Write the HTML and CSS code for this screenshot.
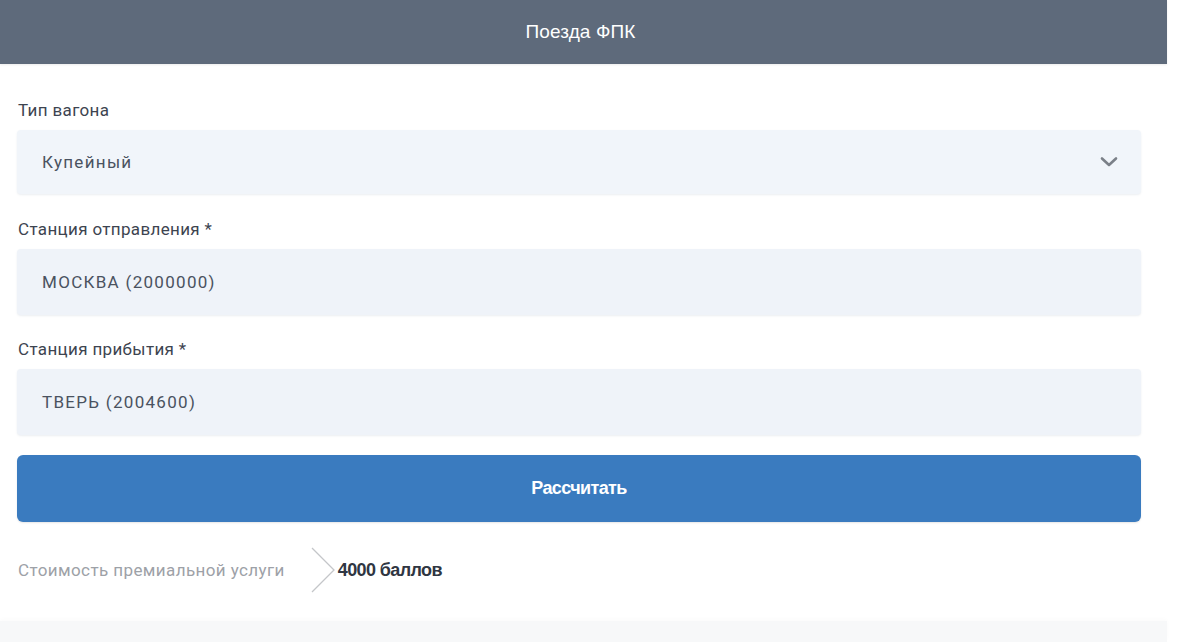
FILE: index.html
```html
<!DOCTYPE html>
<html lang="ru">
<head>
<meta charset="utf-8">
<title>Поезда ФПК</title>
<link rel="stylesheet" href="styles.css">
</head>
<body>
<div class="page">
  <header class="topbar"><span class="title">Поезда ФПК</span></header>
  <form class="form">
    <div class="field field-first">
      <label class="label">Тип вагона</label>
      <div class="control select">
        <span class="value">Купейный</span>
        <svg class="chev" width="18" height="12" viewBox="0 0 18 12"><path d="M2 2.5 L9 9 L16 2.5" fill="none" stroke="#7b8088" stroke-width="2.6" stroke-linecap="round" stroke-linejoin="round"/></svg>
      </div>
    </div>
    <div class="field">
      <label class="label">Станция отправления *</label>
      <div class="control input"><span class="value">МОСКВА (2000000)</span></div>
    </div>
    <div class="field field-last">
      <label class="label">Станция прибытия *</label>
      <div class="control input"><span class="value">ТВЕРЬ (2004600)</span></div>
    </div>
    <button type="button" class="btn">Рассчитать</button>
    <div class="cost">
      <span class="cost-label">Стоимость премиальной услуги</span>
      <svg class="sep" width="26" height="46" viewBox="0 0 26 46"><path d="M1 1 L23 23 L1 45" fill="none" stroke="#c4c6c9" stroke-width="1.3"/></svg>
      <span class="cost-value">4000 баллов</span>
    </div>
  </form>
  <div class="band"></div>
</div>
</body>
</html>
```
FILE: styles.css
```css
html, body {
  margin: 0;
  padding: 0;
  background: #ffffff;
}
body {
  font-family: Roboto, "Liberation Sans", sans-serif;
  color: #3b4350;
  overflow: hidden;
}
.page {
  width: 1167px;
  height: 642px;
  display: flex;
  flex-direction: column;
}
.topbar {
  height: 64px;
  background: #5e6a7b;
  display: flex;
  align-items: center;
  justify-content: center;
  box-shadow: 0 1px 2px rgba(0,0,0,0.08);
}
.title {
  color: #ffffff;
  font-family: "Liberation Sans", Arial, sans-serif;
  font-size: 19px;
  letter-spacing: 0.1px;
  padding-right: 6px;
}
.form {
  padding: 36px 26px 0 17px;
  display: flex;
  flex-direction: column;
}
.field {
  display: flex;
  flex-direction: column;
  gap: 10px;
  margin-bottom: 24px;
}
.field-first {
  margin-bottom: 25px;
}
.field-last {
  margin-bottom: 20px;
}
.label {
  font-size: 17px;
  line-height: 20px;
  color: #3d4450;
  padding-left: 1px;
  letter-spacing: 0.35px;
}
.control {
  height: 66px;
  background: #eff3f9;
  border-radius: 4px;
  display: flex;
  align-items: center;
  padding: 0 24px;
  box-shadow: 0 1px 2px rgba(180,190,205,0.25);
}
.select {
  height: 64px;
  background: #f1f5fa;
  justify-content: space-between;
  padding-right: 23px;
}
.value {
  font-size: 17px;
  color: #4a5260;
  letter-spacing: 1.3px;
  padding-left: 1px;
}
.btn {
  height: 67px;
  border: none;
  border-radius: 6px;
  background: #3a7bbf;
  color: #ffffff;
  font-family: "Liberation Sans", Arial, sans-serif;
  font-weight: bold;
  font-size: 18px;
  letter-spacing: -0.6px;
  padding: 0;
  box-shadow: 0 1px 2px rgba(0,0,0,0.1);
}
.cost {
  display: flex;
  align-items: center;
  height: 48px;
  margin-top: 24px;
  padding-left: 1px;
}
.cost-label {
  font-size: 17px;
  color: #9da1a7;
  letter-spacing: 0.4px;
  margin-right: 26px;
}
.sep {
  flex: none;
}
.cost-value {
  font-family: "Liberation Sans", Arial, sans-serif;
  font-weight: bold;
  font-size: 18px;
  letter-spacing: -0.6px;
  color: #2f3642;
  margin-left: 1px;
}
.band {
  margin-top: auto;
  height: 21px;
  background: #f7f8f9;
  box-shadow: 0 -2px 4px rgba(0,0,0,0.02);
}
```
